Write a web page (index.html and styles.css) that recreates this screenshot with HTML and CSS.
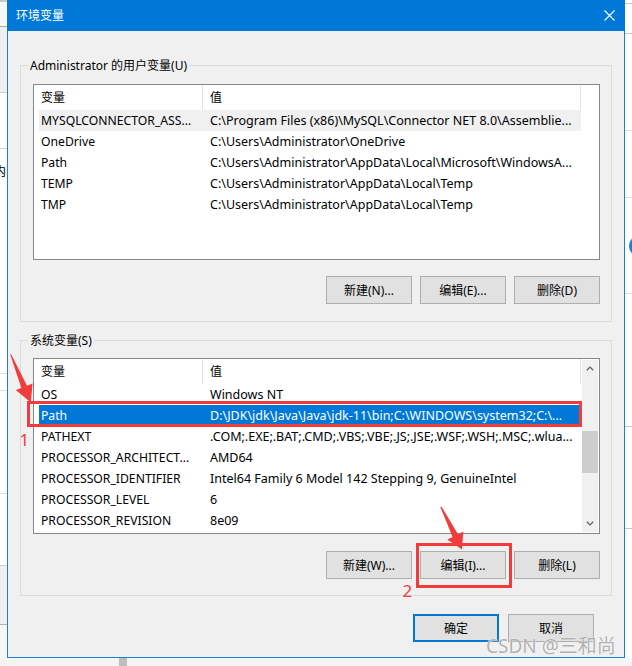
FILE: index.html
```html
<!DOCTYPE html>
<html lang="zh-CN">
<head>
<meta charset="utf-8">
<title>环境变量</title>
<link rel="stylesheet" href="styles.css">
</head>
<body>
<div class="screen">
  <div class="main">
    <div class="side side-left"><span class="cut-char">内</span></div>
    <div class="dialog">
      <div class="titlebar">
        <span class="title">环境变量</span>
        <svg class="close" width="11" height="11" viewBox="0 0 11 11"><path d="M0.5 0.5L10.5 10.5M10.5 0.5L0.5 10.5" stroke="#fff" stroke-width="1.1" fill="none"/></svg>
      </div>
      <div class="body">
        <div class="group group-user">
          <span class="legend">Administrator 的用户变量(U)</span>
          <div class="listview">
            <div class="table">
              <div class="header"><div class="h1">变量</div><div class="h2">值</div></div>
              <div class="row hot"><div class="c1">MYSQLCONNECTOR_ASS...</div><div class="c2">C:\Program Files (x86)\MySQL\Connector NET 8.0\Assemblie...</div></div>
              <div class="row"><div class="c1">OneDrive</div><div class="c2">C:\Users\Administrator\OneDrive</div></div>
              <div class="row"><div class="c1">Path</div><div class="c2">C:\Users\Administrator\AppData\Local\Microsoft\WindowsA...</div></div>
              <div class="row"><div class="c1">TEMP</div><div class="c2">C:\Users\Administrator\AppData\Local\Temp</div></div>
              <div class="row"><div class="c1">TMP</div><div class="c2">C:\Users\Administrator\AppData\Local\Temp</div></div>
            </div>
            <div class="noscroll"></div>
          </div>
          <div class="btnrow btnrow-user">
            <button class="btn">新建(N)...</button>
            <button class="btn">编辑(E)...</button>
            <button class="btn">删除(D)</button>
          </div>
        </div>
        <div class="group group-sys">
          <span class="legend">系统变量(S)</span>
          <div class="listview">
            <div class="table">
              <div class="header"><div class="h1">变量</div><div class="h2">值</div></div>
              <div class="row"><div class="c1">OS</div><div class="c2">Windows NT</div></div>
              <div class="row sel"><div class="c1">Path</div><div class="c2">D:\JDK\jdk\Java\Java\jdk-11\bin;C:\WINDOWS\system32;C:\...</div></div>
              <div class="row"><div class="c1">PATHEXT</div><div class="c2">.COM;.EXE;.BAT;.CMD;.VBS;.VBE;.JS;.JSE;.WSF;.WSH;.MSC;.wlua...</div></div>
              <div class="row"><div class="c1">PROCESSOR_ARCHITECT...</div><div class="c2">AMD64</div></div>
              <div class="row"><div class="c1">PROCESSOR_IDENTIFIER</div><div class="c2">Intel64 Family 6 Model 142 Stepping 9, GenuineIntel</div></div>
              <div class="row"><div class="c1">PROCESSOR_LEVEL</div><div class="c2">6</div></div>
              <div class="row"><div class="c1">PROCESSOR_REVISION</div><div class="c2">8e09</div></div>
            </div>
            <div class="scrollbar">
              <div class="arrow"><svg width="8" height="5" viewBox="0 0 8 5"><path d="M0.8 4.3L4 1.1L7.2 4.3" stroke="#606060" stroke-width="1.3" fill="none"/></svg></div>
              <div class="track"><div class="thumb"></div></div>
              <div class="arrow"><svg width="8" height="5" viewBox="0 0 8 5"><path d="M0.8 0.7L4 3.9L7.2 0.7" stroke="#606060" stroke-width="1.3" fill="none"/></svg></div>
            </div>
          </div>
          <div class="btnrow btnrow-sys">
            <button class="btn">新建(W)...</button>
            <button class="btn">编辑(I)...</button>
            <button class="btn">删除(L)</button>
          </div>
        </div>
        <div class="okrow">
          <button class="btn btn-default">确定</button>
          <button class="btn">取消</button>
        </div>
      </div>
    </div>
    <div class="side side-right"><span class="blue-dot"></span></div>
  </div>
  <div class="bottom-strip"><span class="gray-sq"></span></div>

  <svg class="annot" width="632" height="666" viewBox="0 0 632 666">
    <rect x="28.5" y="402.5" width="552" height="23" fill="none" stroke="#f23c3c" stroke-width="3"/>
    <rect x="417.5" y="544.5" width="93" height="42" fill="none" stroke="#f23c3c" stroke-width="3"/>
    <polygon points="11,354 27,385.7 32.6,383.6 30.8,402.5 15.8,390 21.4,387.9 10.2,354.6" fill="#f23c3c"/>
    <polygon points="441.5,506.5 458,534.3 463.3,531.6 462,549.5 447.3,539.6 452.6,536.9 440.4,507.2" fill="#f23c3c"/>
    <text x="19.5" y="446" class="num">1</text>
    <text x="402.5" y="597" class="num">2</text>
  </svg>
  <div class="watermark">CSDN @三和尚</div>
</div>
</body>
</html>
```

FILE: styles.css
```css
* { box-sizing: border-box; }
html, body {
  margin: 0;
  padding: 0;
  background: #ffffff;
}
body {
  font-family: "Noto Sans", "Noto Sans CJK SC", sans-serif;
  font-size: 12px;
  color: #000;
}
.screen {
  position: relative;
  width: 632px;
  height: 666px;
  overflow: hidden;
}
.main {
  display: flex;
  height: 658px;
}
.side {
  position: relative;
  width: 7px;
  flex: none;
  overflow: hidden;
}
.side-left {
  background: linear-gradient(to bottom,
    #c8c8c8 0 2px, #f7f7f7 2px 26px, #a8a8a8 26px 27px, #f0f0f0 27px 92px,
    #cfcfcf 92px 93px, #ffffff 93px 148px, #cfcfcf 148px 149px, #ffffff 149px 373px,
    #dcdcdc 373px 374px, #ffffff 374px 390px, #dcdcdc 390px 391px, #ffffff 391px 493px,
    #dcdcdc 493px 494px, #ffffff 494px 565px, #cfcfcf 565px 566px, #f0f0f0 566px 624px,
    #b0b0b0 624px 625px, #f7f7f7 625px);
}
.cut-char {
  position: absolute;
  left: -6px;
  top: 165px;
  font-size: 12px;
  line-height: 14px;
}
.side-right {
  background: linear-gradient(to bottom,
    #ffffff 0 3px, #c8c8c8 3px 4px, #ffffff 4px 33px, #c8c8c8 33px 34px, #ffffff 34px 130px,
    #dcdcdc 130px 131px, #ffffff 131px 197px, #dcdcdc 197px 198px, #ffffff 198px 293px,
    #dcdcdc 293px 294px, #ffffff 294px 426px, #c8c8c8 426px 427px, #ffffff 427px 528px,
    #c8c8c8 528px 529px, #ffffff 529px);
}
.blue-dot {
  position: absolute;
  left: 4px;
  top: 235px;
  width: 22px;
  height: 22px;
  border-radius: 50%;
  background: #1a7fd6;
}
.bottom-strip {
  height: 8px;
  background: #f4f4f4;
  display: flex;
}
.gray-sq {
  margin-left: 119px;
  width: 8px;
  height: 8px;
  background: #bdbdbd;
}

.dialog {
  width: 618px;
  flex: none;
  border: 1px solid #1c80d6;
  border-top: none;
  background: #f0f0f0;
  display: flex;
  flex-direction: column;
}
.titlebar {
  height: 31px;
  background: #0078d7;
  display: flex;
  align-items: center;
  justify-content: space-between;
  margin: 0 -1px;
  padding-left: 9px;
  padding-right: 10px;
}
.title {
  color: #fff;
  font-size: 12px;
  line-height: 16px;
}
.close { display: block; }
.body {
  flex: 1;
  padding: 34px 12px 15px;
}
.group {
  position: relative;
  border: 1px solid #dcdcdc;
}
.group-user { padding: 18px 11px 17px 12px; }
.group-sys { margin-top: 18px; padding: 17px 11px 16px 12px; }
.legend {
  position: absolute;
  left: 7px;
  top: -8px;
  padding: 0 2px;
  line-height: 16px;
  background: #f0f0f0;
  white-space: nowrap;
}
.listview {
  height: 176px;
  border: 1px solid #828790;
  background: #fff;
  display: flex;
}
.table {
  width: 547px;
  flex: none;
}
.header {
  display: flex;
  height: 25px;
  line-height: 25px;
}
.h1 {
  width: 169px;
  padding-left: 7px;
  border-right: 1px solid #e5e5e5;
}
.h2 {
  flex: 1;
  padding-left: 7px;
  border-right: 1px solid #e5e5e5;
}
.row {
  display: flex;
  height: 21px;
  line-height: 21px;
  margin-left: 5px;
  white-space: nowrap;
  font-size: 12.5px;
}
.row.hot { background: #f0f0f0; }
.row.sel { background: #0078d7; color: #fff; }
.c1 {
  width: 164px;
  flex: none;
  padding-left: 2px;
  overflow: visible;
  font-size: 12.2px;
}
.c2 {
  flex: 1;
  min-width: 0;
  padding-left: 7px;
  overflow: hidden;
  text-overflow: ellipsis;
}
.noscroll { flex: 1; }
.scrollbar {
  flex: 1;
  margin: 1px;
  background: #f0f0f0;
  display: flex;
  flex-direction: column;
}
.arrow {
  height: 17px;
  display: flex;
  align-items: center;
  justify-content: center;
}
.arrow svg { display: block; }
.track { flex: 1; }
.thumb {
  margin-top: 54px;
  height: 42px;
  background: #cdcdcd;
}
.btnrow {
  display: flex;
  justify-content: flex-end;
  gap: 8px;
}
.btnrow-user { margin-top: 16px; }
.btnrow-sys { margin-top: 17px; }
.btn {
  width: 86px;
  height: 28px;
  margin: 0;
  padding: 0;
  border: 1px solid #adadad;
  background: #e1e1e1;
  font-family: "Noto Sans", "Noto Sans CJK SC", sans-serif;
  font-size: 12px;
  color: #000;
  white-space: nowrap;
}
.btn-default {
  border: 2px solid #0078d7;
}
.okrow {
  display: flex;
  justify-content: flex-end;
  gap: 9px;
  margin-top: 18px;
  padding-right: 18px;
}
.annot {
  position: absolute;
  left: 0;
  top: 0;
  pointer-events: none;
}
.num {
  font-family: "Noto Sans", sans-serif;
  font-size: 17px;
  fill: #f23c3c;
}
.watermark {
  position: absolute;
  left: 486px;
  top: 635px;
  font-family: "Noto Sans", "Noto Sans CJK SC", sans-serif;
  font-size: 19px;
  line-height: 22px;
  color: #b0b0b0;
  text-shadow: 0 0 1px #ffffff, 0 0 1px #ffffff;
  white-space: nowrap;
}
```
